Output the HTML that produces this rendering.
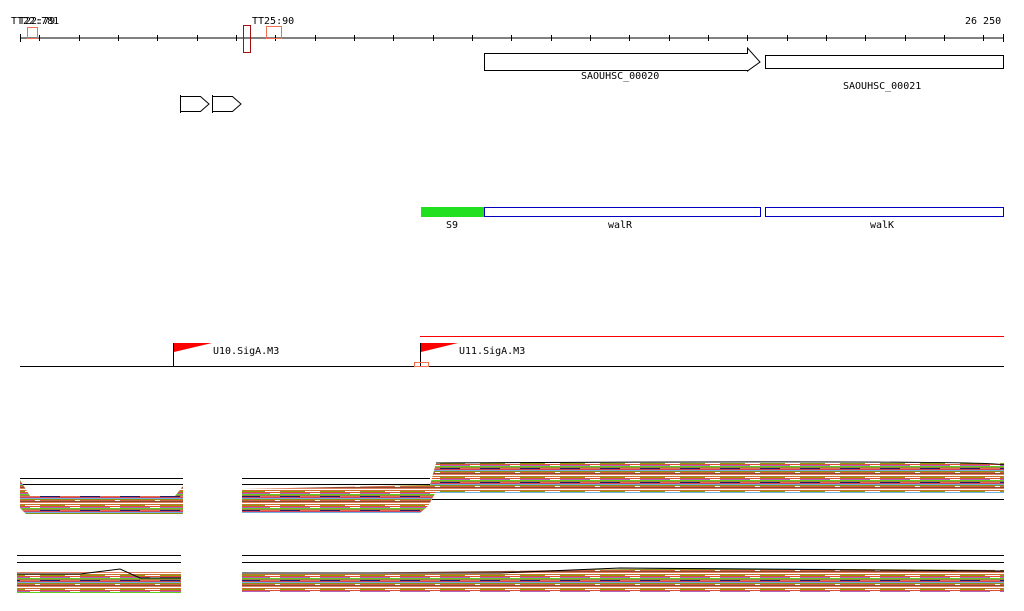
<!DOCTYPE html>
<html><head><meta charset="utf-8"><style>
html,body{margin:0;padding:0;background:#fff;width:1024px;height:611px;overflow:hidden}
svg{display:block}
text{font-family:"DejaVu Sans Mono","Liberation Mono",monospace;font-size:10px;fill:#000}
</style></head><body>
<svg width="1024" height="611" viewBox="0 0 1024 611" xmlns="http://www.w3.org/2000/svg">
<defs>
<pattern id="st" width="40" height="14" patternUnits="userSpaceOnUse">
<rect width="40" height="14" fill="#fff"/>
<rect y="0" width="40" height="1" fill="#c87030"/>
<rect y="1" width="25" height="1" fill="#88a010"/>
<rect y="2" width="40" height="1" fill="#e05030"/>
<rect y="3" width="30" height="1" fill="#b060c0"/>
<rect y="4" width="40" height="1" fill="#60d020"/>
<rect y="5" width="40" height="1" fill="#a08040"/>
<rect y="6" width="20" height="1" fill="#202060"/>
<rect x="20" y="6" width="20" height="1" fill="#e07050"/>
<rect y="7" width="40" height="1" fill="#d04060"/>
<rect y="8" width="40" height="1" fill="#70b0e0"/>
<rect y="9" width="40" height="1" fill="#909010"/>
<rect y="10" width="35" height="1" fill="#d06040"/>
<rect y="11" width="40" height="1" fill="#8a4a30"/>
<rect y="12" width="40" height="1" fill="#e08060"/>
<rect y="13" width="40" height="1" fill="#fff"/>
</pattern>
</defs>
<line x1="20" y1="38" x2="1004" y2="38" stroke="#000"/>
<g stroke="#000">
<line x1="20.5" y1="34" x2="20.5" y2="42"/>
<line x1="1003.5" y1="34" x2="1003.5" y2="42"/>
</g>
<g stroke="#000">
<line x1="39.5" y1="35" x2="39.5" y2="41"/><line x1="79.5" y1="35" x2="79.5" y2="41"/><line x1="118.5" y1="35" x2="118.5" y2="41"/><line x1="157.5" y1="35" x2="157.5" y2="41"/><line x1="197.5" y1="35" x2="197.5" y2="41"/><line x1="236.5" y1="35" x2="236.5" y2="41"/><line x1="275.5" y1="35" x2="275.5" y2="41"/><line x1="315.5" y1="35" x2="315.5" y2="41"/><line x1="354.5" y1="35" x2="354.5" y2="41"/><line x1="393.5" y1="35" x2="393.5" y2="41"/><line x1="433.5" y1="35" x2="433.5" y2="41"/><line x1="472.5" y1="35" x2="472.5" y2="41"/><line x1="511.5" y1="35" x2="511.5" y2="41"/><line x1="551.5" y1="35" x2="551.5" y2="41"/><line x1="590.5" y1="35" x2="590.5" y2="41"/><line x1="629.5" y1="35" x2="629.5" y2="41"/><line x1="669.5" y1="35" x2="669.5" y2="41"/><line x1="708.5" y1="35" x2="708.5" y2="41"/><line x1="747.5" y1="35" x2="747.5" y2="41"/><line x1="787.5" y1="35" x2="787.5" y2="41"/><line x1="826.5" y1="35" x2="826.5" y2="41"/><line x1="865.5" y1="35" x2="865.5" y2="41"/><line x1="905.5" y1="35" x2="905.5" y2="41"/><line x1="944.5" y1="35" x2="944.5" y2="41"/><line x1="983.5" y1="35" x2="983.5" y2="41"/>
</g>
<text x="11" y="24">TT22:781</text>
<text x="19" y="24">T22:79</text>
<text x="252" y="24">TT25:90</text>
<text x="965" y="24">26 250</text>
<rect x="27.5" y="27.5" width="10" height="11" fill="none" stroke="#f07050"/>
<rect x="266.5" y="26.5" width="15" height="12" fill="none" stroke="#f07050"/>
<rect x="243.5" y="25.5" width="7" height="27" fill="none" stroke="#a01010"/>
<path d="M484.5 53.5H747.5V48L760 62L747.5 71V70.5H484.5Z" fill="#fff" stroke="#000"/>
<rect x="765.5" y="55.5" width="238" height="13" fill="none" stroke="#000"/>
<text x="581" y="79">SAOUHSC_00020</text>
<text x="843" y="89">SAOUHSC_00021</text>
<path d="M180.5 95V113M180.5 96.5H200.5L209 104L200.5 111.5H180.5M212.5 95V113M212.5 96.5H232.5L241 104L232.5 111.5H212.5" fill="none" stroke="#000"/>
<rect x="421" y="207" width="63" height="10" fill="#20e020"/>
<rect x="484.5" y="207.5" width="276" height="9" fill="none" stroke="#0000c0"/>
<rect x="765.5" y="207.5" width="238" height="9" fill="none" stroke="#0000c0"/>
<text x="446" y="228">S9</text>
<text x="608" y="228">walR</text>
<text x="870" y="228">walK</text>
<line x1="420" y1="336.5" x2="1004" y2="336.5" stroke="#f00"/>
<line x1="20" y1="366.5" x2="1004" y2="366.5" stroke="#000"/>
<line x1="173.5" y1="343" x2="173.5" y2="366" stroke="#000"/>
<path d="M174 343H212L174 352Z" fill="#f00"/>
<text x="213" y="354">U10.SigA.M3</text>
<line x1="420.5" y1="343" x2="420.5" y2="366" stroke="#000"/>
<path d="M421 343H458L421 352Z" fill="#f00"/>
<text x="459" y="354">U11.SigA.M3</text>
<rect x="414.5" y="362.5" width="14" height="4" fill="none" stroke="#f07050"/>
<g stroke="#000">
<line x1="20" y1="478.5" x2="183" y2="478.5"/><line x1="20" y1="484.5" x2="183" y2="484.5"/>
<line x1="242" y1="478.5" x2="430" y2="478.5"/><line x1="242" y1="484.5" x2="430" y2="484.5"/>
<line x1="432" y1="499.5" x2="1004" y2="499.5"/>
<line x1="17" y1="555.5" x2="181" y2="555.5"/><line x1="17" y1="562.5" x2="181" y2="562.5"/>
<line x1="242" y1="555.5" x2="1004" y2="555.5"/><line x1="242" y1="562.5" x2="1004" y2="562.5"/>
</g>
<path d="M20 480L30 496H175L183 486V514H26L20 508Z" fill="url(#st)"/>
<path d="M242 489L430 485L436 463H1004V492H1004L436 492L428 506L420 513H242Z" fill="url(#st)"/>
<path d="M436 463Q1000 460 1004 465" fill="none" stroke="#000"/>
<line x1="436" y1="492.5" x2="1004" y2="492.5" stroke="#70b0e0"/>
<path d="M17 572H181V593H17Z" fill="url(#st)"/>
<path d="M242 574L500 571L700 568L1004 570V592H242Z" fill="url(#st)"/>
<path d="M242 573H500L620 568L1004 571" fill="none" stroke="#000"/>
<path d="M17 574H80L120 569L140 578H181" fill="none" stroke="#000"/>
</svg>
</body></html>
